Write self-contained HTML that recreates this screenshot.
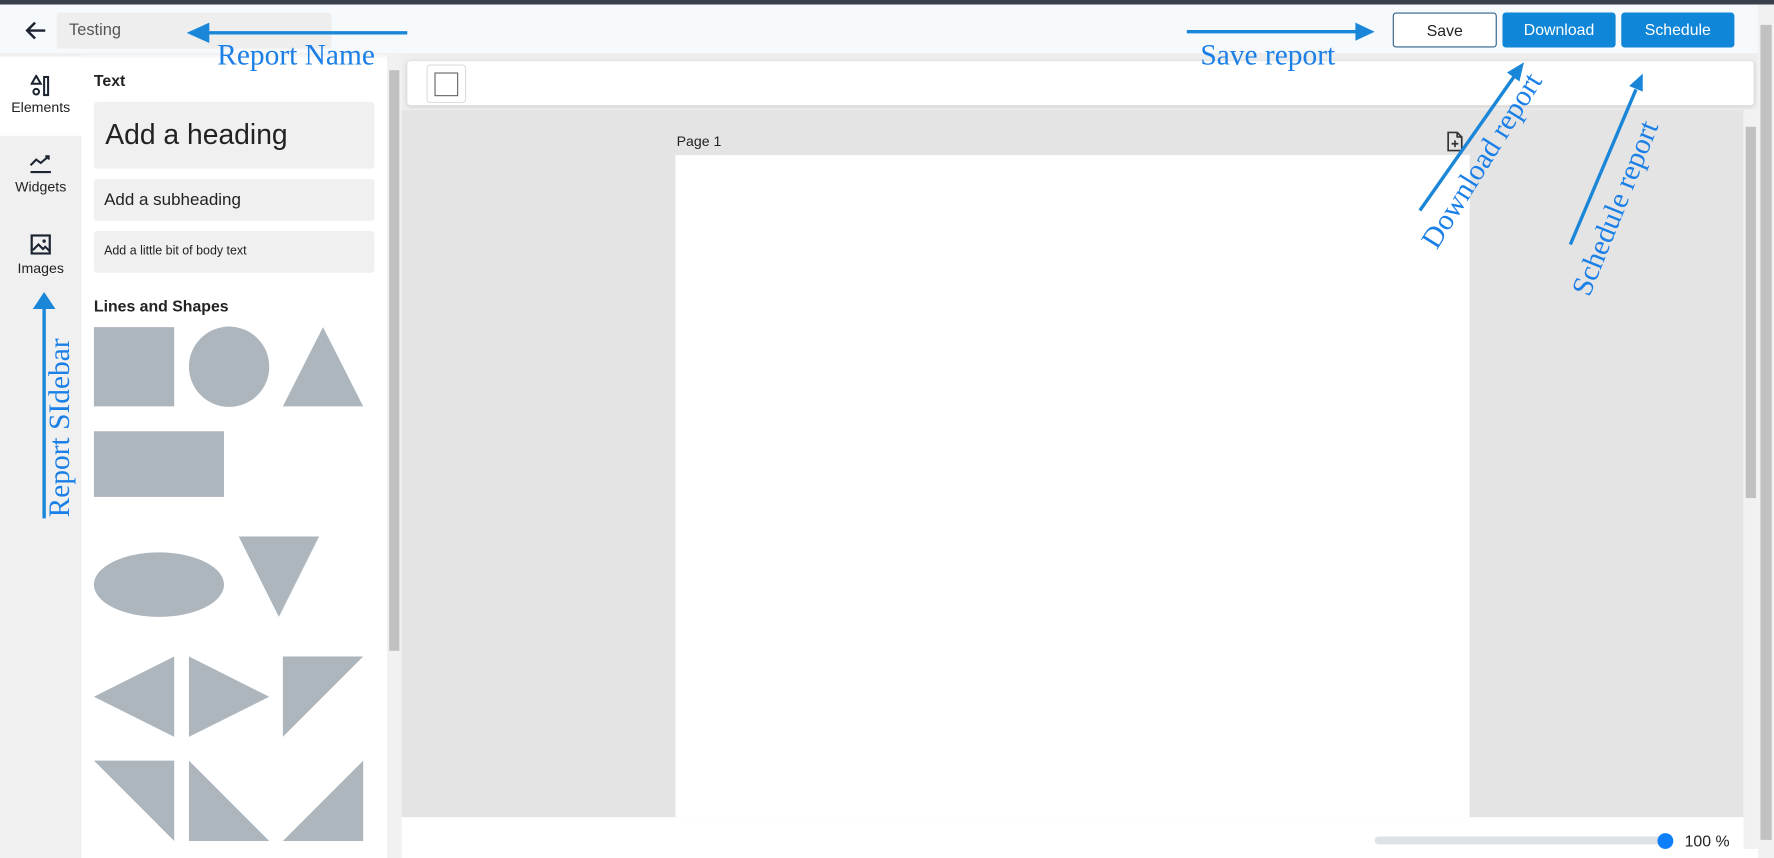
<!DOCTYPE html>
<html><head><meta charset="utf-8"><style>
html,body{margin:0;padding:0;width:1774px;height:858px;overflow:hidden;background:#fff;font-family:"Liberation Sans",sans-serif}
#w{position:absolute;left:0;top:0;width:1568px;height:758px;transform:scale(1.13138,1.13193);transform-origin:0 0;overflow:hidden}
.a{position:absolute}
.btn{position:absolute;top:11px;height:31px;border-radius:3px;font-size:14px;line-height:31px;text-align:center;box-sizing:border-box}
.tab{position:absolute;left:0;width:72px;height:70px;text-align:center;font-size:12.5px;color:#222}
.card{position:absolute;left:83px;width:248px;background:#f0f0f0;border-radius:3px;color:#222}
.ann{position:absolute;font-family:"Liberation Serif",serif;color:#1a7fe6;font-size:26px;white-space:nowrap}
</style></head><body><div id="w">
<div class="a" style="left:0;top:0;width:1568px;height:4px;background:#3a3f4c"></div>
<div class="a" style="left:0;top:4px;width:1554px;height:43px;background:#f7fafc;box-shadow:0 2px 4px rgba(0,0,0,.08)"></div>
<svg class="a" style="left:22px;top:18px" width="20" height="18" viewBox="0 0 20 18"><path d="M18 9H3M9 2L2 9l7 7" fill="none" stroke="#1b2230" stroke-width="2.2"/></svg>
<div class="a" style="left:50px;top:11px;width:243px;height:32px;background:#eeeeee;border-radius:3px;font-size:14.5px;color:#555;line-height:32px;padding-left:11px;box-sizing:border-box">Testing</div>
<div class="btn" style="left:1231px;width:92px;background:#fff;border:1px solid #2e5f86;color:#222">Save</div>
<div class="btn" style="left:1328px;width:100px;background:#0f86d8;color:#fff">Download</div>
<div class="btn" style="left:1433px;width:100px;background:#0f86d8;color:#fff">Schedule</div>
<div class="a" style="left:1554px;top:4px;width:14px;height:754px;background:#f1f1f1"></div>
<div class="a" style="left:1556px;top:22px;width:10px;height:720px;background:#c1c1c1"></div>
<div class="a" style="left:0;top:47px;width:72px;height:711px;background:#f0f0f0"></div>
<div class="tab" style="top:50px;background:#fff;height:70px">
<svg style="margin-top:16px" width="18" height="20" viewBox="0 0 18 20"><path d="M5 1L1 8h8z" fill="none" stroke="#1b2230" stroke-width="1.8"/><circle cx="5" cy="15" r="2.5" fill="none" stroke="#1b2230" stroke-width="1.8"/><rect x="12" y="2" width="3.5" height="16" fill="none" stroke="#1b2230" stroke-width="1.8"/></svg><div style="margin-top:-1px">Elements</div></div>
<div class="tab" style="top:120px"><svg style="margin-top:16px" width="20" height="18" viewBox="0 0 20 18"><path d="M1 10l5-5 4 3 7-6M14 2h3v3M1 16h18" fill="none" stroke="#1b2230" stroke-width="1.8"/></svg><div style="margin-top:1px">Widgets</div></div>
<div class="tab" style="top:190px"><svg style="margin-top:17px" width="18" height="18" viewBox="0 0 18 18"><rect x="1" y="1" width="16" height="16" fill="none" stroke="#1b2230" stroke-width="2"/><path d="M2 14l5-5 4 4 2-2 4 4" fill="none" stroke="#1b2230" stroke-width="1.8"/><circle cx="12" cy="6" r="1.5" fill="#1b2230"/></svg><div style="margin-top:2px">Images</div></div>
<div class="a" style="left:83px;top:63px;font-size:14px;font-weight:bold;color:#222">Text</div>
<div class="card" style="top:90px;height:59px;font-size:25px;line-height:59px;padding-left:10px;box-sizing:border-box">Add a heading</div>
<div class="card" style="top:158px;height:37px;font-size:15px;line-height:37px;padding-left:9px;box-sizing:border-box">Add a subheading</div>
<div class="card" style="top:204px;height:37px;font-size:11px;line-height:37px;padding-left:9px;box-sizing:border-box">Add a little bit of body text</div>
<div class="a" style="left:83px;top:262px;font-size:14px;font-weight:bold;color:#222">Lines and Shapes</div>
<svg class="a" style="left:0;top:0" width="342" height="758"><g fill="#adb5bd">
<rect x="83" y="289" width="71" height="70"/><circle cx="202.5" cy="324" r="35.5"/><path d="M285.5 289L321 359H250z"/>
<rect x="83" y="381" width="115" height="58"/><ellipse cx="140.5" cy="516.5" rx="57.5" ry="28.5"/><path d="M211 474h71l-35.5 71z"/>
<path d="M154 580v71L83 615.5z"/><path d="M167 580v71l71-35.5z"/><path d="M250 580h71l-71 71z"/>
<path d="M83 672h71v71z"/><path d="M167 672v71h71z"/><path d="M321 672v71h-71z"/></g></svg>
<div class="a" style="left:342px;top:47px;width:13px;height:711px;background:#f1f1f1"></div>
<div class="a" style="left:344px;top:62px;width:9px;height:513px;background:#c1c1c1"></div>
<div class="a" style="left:355px;top:47px;width:1199px;height:50px;background:#eeeeee"></div>
<div class="a" style="left:360px;top:54px;width:1190px;height:39px;background:#fff;border-radius:3px;box-shadow:0 1px 4px rgba(0,0,0,.15)"></div>
<div class="a" style="left:377px;top:57px;width:35px;height:34px;border:1px solid #ddd;border-radius:3px;box-sizing:border-box"><div style="margin:6px;width:21px;height:21px;border:1px solid #666;box-sizing:border-box"></div></div>
<div class="a" style="left:355px;top:97px;width:1186px;height:625px;background:#e4e4e4"></div>
<div class="a" style="left:1541px;top:97px;width:13px;height:653px;background:#f1f1f1"></div>
<div class="a" style="left:1543px;top:112px;width:9px;height:328px;background:#c1c1c1"></div>
<div class="a" style="left:598px;top:118px;font-size:12.5px;color:#222">Page 1</div>
<svg class="a" style="left:1278px;top:116px" width="16" height="18" viewBox="0 0 16 18"><path d="M2 1h8l4 4v12H2z M10 1v4h4 M8 8v6M5 11h6" fill="none" stroke="#333" stroke-width="1.5"/></svg>
<div class="a" style="left:597px;top:137px;width:702px;height:585px;background:#fff"></div>
<div class="a" style="left:1215px;top:739px;width:257px;height:7px;border-radius:4px;background:#dee2e6"></div>
<div class="a" style="left:1465px;top:736px;width:14px;height:14px;border-radius:50%;background:#0d7ffb"></div>
<div class="a" style="left:1489px;top:735px;font-size:14px;color:#222">100 %</div>
<svg class="a" style="left:0;top:0" width="1568" height="758"><g stroke="#1a86d8" stroke-width="3" fill="#1a86d8">
<line x1="360" y1="29" x2="180" y2="29"/><path d="M165 29l20-9v18z" stroke="none"/>
<line x1="1049" y1="28" x2="1200" y2="28"/><path d="M1215 28l-17-8v16z" stroke="none"/>
<line x1="39" y1="458" x2="39" y2="272"/><path d="M39 258l-10 15h20z" stroke="none"/>
<line x1="1255" y1="186" x2="1338" y2="68"/><path d="M1347 55l-15 9 11 8z" stroke="none"/>
<line x1="1388" y1="216" x2="1446" y2="79"/><path d="M1452 65l-12 11 12 5z" stroke="none"/>
</g></svg>
<div class="ann" style="left:192px;top:34px">Report Name</div>
<div class="ann" style="left:1061px;top:34px">Save report</div>
<div class="ann" style="left:53px;top:378px;transform:translate(-50%,-50%) rotate(-90deg)">Report SIdebar</div>
<div class="ann" style="left:1310px;top:142px;transform:translate(-50%,-50%) rotate(-58deg)">Download report</div>
<div class="ann" style="left:1428px;top:184px;transform:translate(-50%,-50%) rotate(-68deg)">Schedule report</div>
</div></body></html>
